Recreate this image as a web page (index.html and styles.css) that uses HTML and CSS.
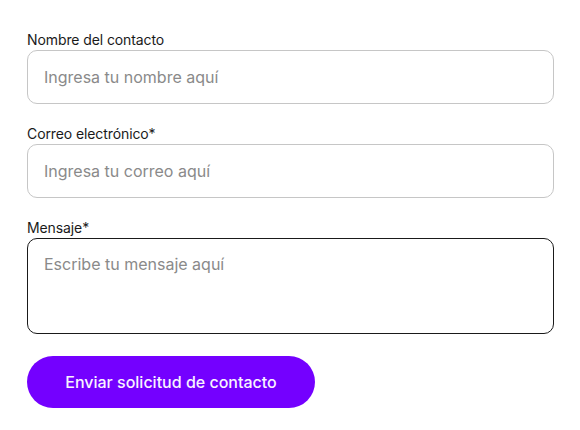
FILE: index.html
```html
<!DOCTYPE html>
<html lang="es">
<head>
<meta charset="utf-8">
<link rel="stylesheet" href="styles.css">
</head>
<body>
<form class="form">
  <div class="field">
    <label class="label" for="nombre">Nombre del contacto</label>
    <input class="input" id="nombre" type="text" placeholder="Ingresa tu nombre aquí">
  </div>
  <div class="field">
    <label class="label" for="correo">Correo electrónico*</label>
    <input class="input" id="correo" type="email" placeholder="Ingresa tu correo aquí">
  </div>
  <div class="field">
    <label class="label" for="mensaje">Mensaje*</label>
    <textarea class="textarea" id="mensaje" placeholder="Escribe tu mensaje aquí"></textarea>
  </div>
  <button class="button" type="button">Enviar solicitud de contacto</button>
</form>
</body>
</html>
```

FILE: styles.css
```css
html, body {
  margin: 0;
  padding: 0;
  background: #ffffff;
}
body {
  font-family: Inter, "Liberation Sans", sans-serif;
  color: #1a1a1a;
}
.form {
  display: flex;
  flex-direction: column;
  padding: 30px 27px 0 27px;
  width: 527px;
}
.field {
  display: flex;
  flex-direction: column;
  margin-bottom: 20px;
}
.label {
  font-size: 14px;
  line-height: 20px;
  letter-spacing: -0.1px;
  color: #1a1a1a;
}
.input, .textarea {
  box-sizing: border-box;
  width: 527px;
  font-family: Inter, "Liberation Sans", sans-serif;
  font-size: 16px;
  line-height: 19px;
  color: #1a1a1a;
  border: 1px solid #c6c6c6;
  border-radius: 10px;
  padding: 0 16px;
  margin: 0;
  outline: none;
  background: #ffffff;
}
.input {
  height: 54px;
}
.textarea {
  height: 96px;
  padding-top: 16px;
  border-color: #1a1a1a;
  resize: none;
  display: block;
}
.input::placeholder, .textarea::placeholder {
  color: #8a8a8a;
  opacity: 1;
}
.field:last-of-type {
  margin-bottom: 22px;
}
.button {
  align-self: flex-start;
  width: 288px;
  height: 52px;
  border: none;
  border-radius: 26px;
  background: #7400ff;
  color: #f8f2ff;
  font-family: Inter, "Liberation Sans", sans-serif;
  font-size: 16px;
  font-weight: 500;
  cursor: pointer;
  padding: 0;
}
```
